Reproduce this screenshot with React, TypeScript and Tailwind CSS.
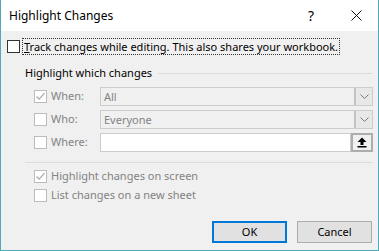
import React from "react";

const font = { fontFamily: '"Segoe UI", "Noto Sans", sans-serif' };

function Check({ checked = false, disabled = false }: { checked?: boolean; disabled?: boolean }) {
  return (
    <div
      className={
        "flex h-[13px] w-[13px] shrink-0 items-center justify-center border bg-white " +
        (disabled ? "border-[#bcbcbc] bg-[#f0f0f0]" : "border-[#333333]")
      }
    >
      {checked && (
        <svg width="11" height="11" viewBox="0 0 11 11">
          <path d="M1.5 5.5 L4.2 8.2 L9.5 2.2" fill="none" stroke="#a8a8a8" strokeWidth="1.2" />
        </svg>
      )}
    </div>
  );
}

function Chevron() {
  return (
    <svg width="9" height="5" viewBox="0 0 9 5">
      <path d="M0.5 0.5 L4.5 4.5 L8.5 0.5" fill="none" stroke="#7a7a7a" strokeWidth="1" />
    </svg>
  );
}

function FieldRow({
  label,
  checked,
  children,
}: {
  label: string;
  checked?: boolean;
  children: React.ReactNode;
}) {
  return (
    <div className="flex h-[19px] items-center">
      <Check checked={checked} disabled />
      <span className="ml-[4px] w-[49px] text-[#838383]">{label}</span>
      {children}
    </div>
  );
}

function Combo({ value }: { value: string }) {
  return (
    <div className="flex h-[19px] w-[273px] border border-[#cccccc] bg-[#f0f0f0]">
      <div className="flex-1 pl-[3px] leading-[17px] text-[#838383]">{value}</div>
      <div className="flex w-[18px] items-center justify-center border-l-2 border-[#c4c4c4] bg-[#e8e8e8]">
        <Chevron />
      </div>
    </div>
  );
}

export default function App() {
  return (
    <div
      className="flex h-[251px] w-[379px] flex-col border-x border-b border-[#4fa9b9] text-[11px] text-black"
      style={font}
    >
      {/* Title bar */}
      <div className="flex h-[31px] shrink-0 items-center bg-white pl-[8px] text-[12px]">
        <span className="flex-1">Highlight Changes</span>
        <span className="mr-[37px] text-[14px]">?</span>
        <svg className="mr-[16px]" width="11" height="11" viewBox="0 0 11 11">
          <path d="M0.5 0.5 L10.5 10.5 M10.5 0.5 L0.5 10.5" stroke="#111" strokeWidth="1" />
        </svg>
      </div>

      {/* Body */}
      <div className="flex flex-1 flex-col bg-[#f0f0f0] pl-[6px]">
        <div className="mt-[7px] flex h-[17px] items-center">
          <Check />
          <span className="ml-[2px] border border-dotted border-[#333] px-[1px] leading-[15px]">
            <span className="underline">T</span>rack changes while editing. This also shares your workbook.
          </span>
        </div>

        <div className="ml-[18px] mt-[10px] flex w-[347px] items-center">
          <span className="leading-[16px]">Highlight which changes</span>
          <div className="ml-[6px] h-px flex-1 bg-[#dcdcdc]" />
        </div>

        <div className="ml-[27px] mt-[6px] flex flex-col gap-[4px]">
          <FieldRow label="When:" checked>
            <Combo value="All" />
          </FieldRow>
          <FieldRow label="Who:">
            <Combo value="Everyone" />
          </FieldRow>
          <FieldRow label="Where:">
            <div className="flex h-[19px] w-[273px]">
              <div className="flex-1 border border-[#cccccc] bg-white" />
              <div className="flex w-[22px] items-center justify-center border-2 border-[#adadad] bg-[#f0f0f0]">
                <svg width="10" height="11" viewBox="0 0 10 11">
                  <path d="M5 0.5 L9.5 5 L6.5 5 L6.5 8 L3.5 8 L3.5 5 L0.5 5 Z" fill="#000" />
                  <rect x="0.5" y="9" width="9" height="1.5" fill="#000" />
                </svg>
              </div>
            </div>
          </FieldRow>
        </div>

        <div className="ml-[18px] mt-[10px] h-px w-[347px] bg-[#dcdcdc]" />

        <div className="ml-[27px] mt-[6px] flex flex-col gap-[5px] text-[#838383]">
          <div className="flex h-[14px] items-center">
            <Check checked disabled />
            <span className="ml-[4px]">Highlight changes on screen</span>
          </div>
          <div className="flex h-[14px] items-center">
            <Check disabled />
            <span className="ml-[4px]">List changes on a new sheet</span>
          </div>
        </div>

        <div className="mr-[6px] mt-[19px] flex justify-end gap-[10px]">
          <button className="h-[22px] w-[75px] border-2 border-[#0078d7] bg-[#e1e1e1]">OK</button>
          <button className="h-[22px] w-[75px] border border-[#adadad] bg-[#e1e1e1]">Cancel</button>
        </div>
      </div>
    </div>
  );
}
